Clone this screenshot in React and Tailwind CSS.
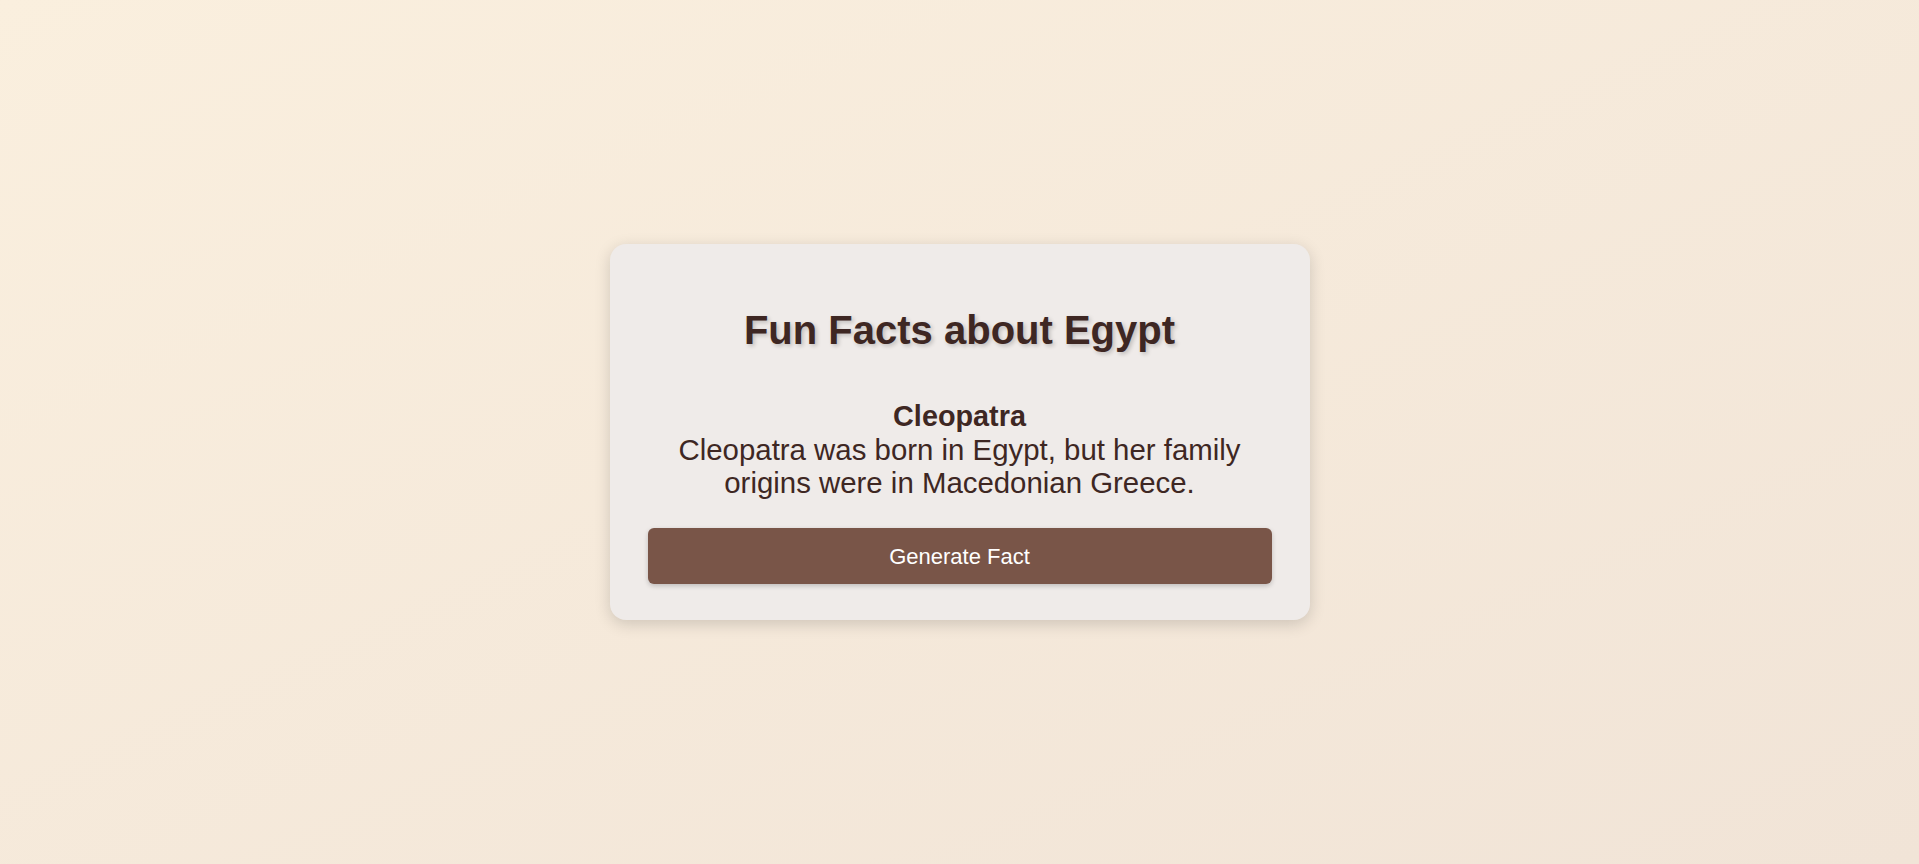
export default function App() {
  return (
    <div className="min-h-screen w-full flex items-center justify-center bg-gradient-to-br from-[#faefde] to-[#f1e4d7] font-['Liberation_Sans',Arial,sans-serif]">

      {/* Card */}
      <div className="w-[700px] bg-[#efebe9] rounded-2xl shadow-[0_4px_16px_rgba(0,0,0,0.16)] px-[38px] pt-[63px] pb-[36px] text-center">
        <h1 className="text-[40px] leading-[46px] font-bold text-[#3e2723] [text-shadow:2px_2px_4px_rgba(0,0,0,0.2)] mb-[46px]">
          Fun Facts about Egypt
        </h1>

        <p className="text-[29.4px] leading-[33.1px] text-[#3e2723] mb-[29px]">
          <strong className="font-bold text-[28.8px]">Cleopatra</strong>
          <br />
          Cleopatra was born in Egypt, but her family origins were in Macedonian Greece.
        </p>

        <button className="w-full h-[56px] flex items-center justify-center rounded-[6px] bg-[#795548] text-white text-[22px] shadow-[0_2px_5px_rgba(0,0,0,0.2)]">
          Generate Fact
        </button>
      </div>
    </div>
  );
}
